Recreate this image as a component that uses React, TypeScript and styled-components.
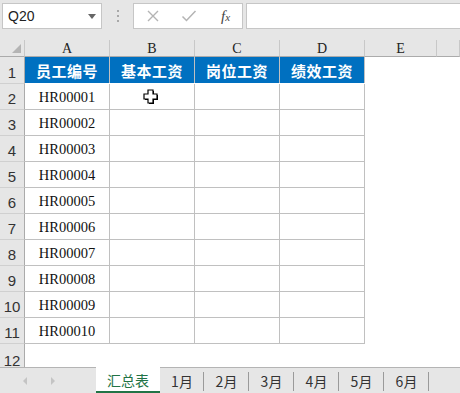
import React from 'react';
import styled, { createGlobalStyle } from 'styled-components';

const GlobalStyle = createGlobalStyle`
  html, body {
    margin: 0;
    padding: 0;
    background: #fff;
  }
  body {
    font-family: "Liberation Sans", "Noto Sans CJK SC", sans-serif;
    overflow: hidden;
  }
`;

const Window = styled.div`
  width: 460px;
  height: 393px;
  display: flex;
  flex-direction: column;
  overflow: hidden;
  background: #fff;
`;

const FormulaBar = styled.div`
  height: 40px;
  background: #e6e6e6;
  display: flex;
  align-items: flex-start;
  padding: 3px 0 0 2px;
  box-sizing: border-box;
  flex-shrink: 0;
`;

const NameBox = styled.div`
  width: 100px;
  height: 26px;
  box-sizing: border-box;
  background: #fff;
  border: 1px solid #c6c6c6;
  display: flex;
  align-items: center;
  justify-content: space-between;
  padding: 0 5px 0 5px;
  font-size: 14px;
  color: #222;
`;

const Caret = styled.span`
  width: 0;
  height: 0;
  border-left: 4px solid transparent;
  border-right: 4px solid transparent;
  border-top: 5px solid #666;
`;

const Dots = styled.div`
  width: 31px;
  height: 26px;
  display: flex;
  flex-direction: column;
  align-items: center;
  justify-content: center;
  gap: 3px;
  span {
    width: 2px;
    height: 2px;
    background: #a8a8a8;
  }
`;

const ButtonBox = styled.div`
  width: 110px;
  height: 26px;
  box-sizing: border-box;
  background: #fff;
  border: 1px solid #c6c6c6;
  display: flex;
  align-items: center;
  padding-left: 12px;
  gap: 16px;
`;

const Fx = styled.span`
  font-family: "Liberation Serif", serif;
  font-style: italic;
  font-size: 15px;
  color: #444;
  margin-left: 8px;
  sub {
    font-size: 11px;
    vertical-align: baseline;
  }
`;

const InputBox = styled.div`
  flex: 1;
  height: 26px;
  margin-left: 3px;
  box-sizing: border-box;
  background: #fff;
  border: 1px solid #c6c6c6;
  border-right: none;
`;

const Sheet = styled.div`
  flex: 1;
  display: grid;
  grid-template-columns: 25px 85px 85px 85px 85px 72px 1fr;
  grid-template-rows: 17px 27px repeat(10, 26px) 1fr;
  overflow: hidden;
`;

const Corner = styled.div`
  background: #e6e6e6;
  border-right: 1px solid #c8c8c8;
  border-bottom: 1px solid #ababab;
  display: flex;
  align-items: flex-end;
  justify-content: flex-end;
  padding: 0 3px 3px 0;
  box-sizing: border-box;
`;

const CornerTriangle = styled.span`
  width: 0;
  height: 0;
  border-left: 9px solid transparent;
  border-bottom: 9px solid #b4b4b4;
`;

const ColHead = styled.div`
  background: #e6e6e6;
  border-right: 1px solid #c8c8c8;
  border-bottom: 1px solid #ababab;
  display: flex;
  align-items: center;
  justify-content: center;
  font-family: "Liberation Serif", serif;
  font-size: 14px;
  color: #222;
  box-sizing: border-box;
  padding-top: 1px;
`;

const RowHead = styled.div<{ $cut?: boolean }>`
  background: #e6e6e6;
  border-right: 1px solid #ababab;
  border-bottom: ${p => (p.$cut ? 'none' : '1px solid #d0d0d0')};
  display: flex;
  align-items: ${p => (p.$cut ? 'flex-start' : 'flex-end')};
  justify-content: center;
  padding: ${p => (p.$cut ? '8px 0 0 0' : '0 0 2px 0')};
  font-size: 15px;
  color: #333;
  box-sizing: border-box;
  overflow: hidden;
`;

const HeadCell = styled.div`
  background: #0070c0;
  border-right: 1px solid #c0c0c0;
  display: flex;
  align-items: center;
  justify-content: center;
  color: #fff;
  font-family: "Noto Sans CJK SC", sans-serif;
  font-weight: 700;
  font-size: 15px;
  letter-spacing: 0.5px;
  box-sizing: border-box;
  margin-bottom: 1px;
`;

const Cell = styled.div`
  border-right: 1px solid #c0c0c0;
  border-bottom: 1px solid #c0c0c0;
  display: flex;
  align-items: center;
  justify-content: center;
  font-family: "Liberation Serif", serif;
  font-size: 14.5px;
  color: #111;
  box-sizing: border-box;
  padding-top: 2px;
`;

const Blank = styled.div``;

const TabBar = styled.div`
  height: 26px;
  flex-shrink: 0;
  background: #e6e6e6;
  display: flex;
  align-items: stretch;
`;

const NavArea = styled.div`
  width: 96px;
  border-top: 1px solid #b4b4b4;
  box-sizing: border-box;
  display: flex;
  align-items: center;
  padding-left: 23px;
  gap: 24px;
`;

const Arrow = styled.span<{ $dir: 'left' | 'right' }>`
  width: 0;
  height: 0;
  border-top: 4px solid transparent;
  border-bottom: 4px solid transparent;
  ${p =>
    p.$dir === 'left'
      ? 'border-right: 4px solid #c4c4c4;'
      : 'border-left: 4px solid #c4c4c4;'}
`;

const ActiveTab = styled.div`
  width: 64px;
  background: #fff;
  border-bottom: 2px solid #217346;
  display: flex;
  align-items: center;
  justify-content: center;
  color: #217346;
  font-family: "Noto Sans CJK SC", sans-serif;
  font-size: 14px;
  box-sizing: border-box;
  padding-top: 1px;
`;

const Tab = styled.div<{ $w: number }>`
  width: ${p => p.$w}px;
  border-top: 1px solid #b4b4b4;
  display: flex;
  align-items: center;
  justify-content: center;
  color: #333;
  font-family: "Noto Sans CJK SC", sans-serif;
  font-size: 14px;
  box-sizing: border-box;
  position: relative;
  &::after {
    content: '';
    position: absolute;
    right: 0;
    top: 4px;
    bottom: 2px;
    width: 1px;
    background: #9a9a9a;
  }
`;

const TabFill = styled.div`
  flex: 1;
  border-top: 1px solid #b4b4b4;
`;

const Pointer = () => (
  <svg width="18" height="18" viewBox="0 0 18 18" style={{ marginLeft: -3, marginTop: -1 }}>
    <path d="M6 2h5v4h4v5h-4v4H6v-4H2V6h4z" fill="#000" transform="translate(1 1)" />
    <path d="M6 2h5v4h4v5h-4v4H6v-4H2V6h4z" fill="#fff" stroke="#000" strokeWidth="1.2" />
  </svg>
);

const headers = ['员工编号', '基本工资', '岗位工资', '绩效工资'];
const ids = Array.from({ length: 10 }, (_, i) => `HR000${String(i + 1).padStart(2, '0')}`);
const sheets = ['1月', '2月', '3月', '4月', '5月', '6月'];

const App: React.FC = () => {
  return (
    <Window>
      <GlobalStyle />
      <FormulaBar>
        <NameBox>
          Q20
          <Caret />
        </NameBox>
        <Dots>
          <span />
          <span />
          <span />
        </Dots>
        <ButtonBox>
          <svg width="14" height="14" viewBox="0 0 14 14">
            <path d="M2 2l10 10M12 2L2 12" stroke="#b4b4b4" strokeWidth="1.4" />
          </svg>
          <svg width="16" height="14" viewBox="0 0 16 14" style={{ marginLeft: 5 }}>
            <path d="M1.5 7.5l4 4L14.5 2" stroke="#b4b4b4" strokeWidth="1.5" fill="none" />
          </svg>
          <Fx>
            f<sub>x</sub>
          </Fx>
        </ButtonBox>
        <InputBox />
      </FormulaBar>

      <Sheet>
        <Corner>
          <CornerTriangle />
        </Corner>
        {['A', 'B', 'C', 'D', 'E'].map(c => (
          <ColHead key={c}>{c}</ColHead>
        ))}
        <ColHead />

        <RowHead>1</RowHead>
        {headers.map(h => (
          <HeadCell key={h}>{h}</HeadCell>
        ))}
        <Blank />
        <Blank />

        {ids.map((id, i) => (
          <React.Fragment key={id}>
            <RowHead>{i + 2}</RowHead>
            <Cell>{id}</Cell>
            <Cell>{i === 0 ? <Pointer /> : null}</Cell>
            <Cell />
            <Cell />
            <Blank />
            <Blank />
          </React.Fragment>
        ))}

        <RowHead $cut>12</RowHead>
        <Blank />
      </Sheet>

      <TabBar>
        <NavArea>
          <Arrow $dir="left" />
          <Arrow $dir="right" />
        </NavArea>
        <ActiveTab>汇总表</ActiveTab>
        {sheets.map((s, i) => (
          <Tab key={s} $w={i === 0 ? 44 : 45}>
            {s}
          </Tab>
        ))}
        <TabFill />
      </TabBar>
    </Window>
  );
};

export default App;
